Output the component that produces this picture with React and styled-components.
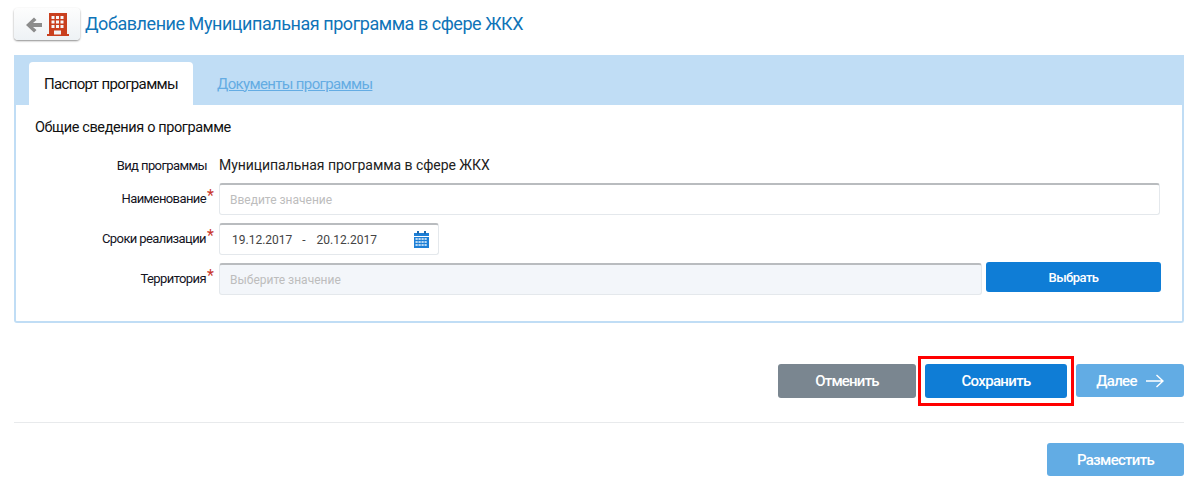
import React from "react";
import styled, { createGlobalStyle } from "styled-components";

const Global = createGlobalStyle`
  html, body { margin: 0; padding: 0; background: #fff; }
  body { font-family: Roboto, "Liberation Sans", sans-serif; color: #1c1c1c; }
  * { box-sizing: border-box; }
`;
const Page = styled.div`
  width: 1200px; height: 487px; overflow: hidden;
  padding: 8px 16px 0 14px;
`;
const Header = styled.header`
  display: flex; align-items: center; gap: 5px; height: 32px; margin-bottom: 15px;
`;
const BackButton = styled.button`
  width: 66px; height: 32px; padding: 0 0 0 11px; border: 0; border-radius: 4px;
  display: flex; align-items: center;
  background: linear-gradient(#fdfdfd, #eef2f5);
  box-shadow: 0 1px 2px rgba(0,0,0,.45);
`;
const Title = styled.h1`
  margin: 0; font-size: 18px; line-height: 32px; font-weight: 400; color: #0f74b8;
  letter-spacing: -0.45px; white-space: nowrap;
`;
const Panel = styled.section`
  height: 268px; border: 2px solid #c0ddf5; border-top: 0; border-radius: 0 0 3px 3px;
`;
const TabBar = styled.div`
  height: 50px; margin: 0 -2px; padding: 7px 0 0 15px; background: #c0ddf5;
  display: flex; align-items: stretch; gap: 24px;
`;
const ActiveTab = styled.div`
  width: 164px; background: #fff; border-radius: 4px 4px 0 0;
  display: flex; align-items: center; justify-content: center;
  font-size: 15px; letter-spacing: -0.64px; color: #111;
`;
const LinkTab = styled.a`
  align-self: center; font-size: 15px; letter-spacing: -0.65px; color: #64ace3;
  text-decoration: underline;
`;
const Body = styled.div`
  padding: 14px 22px 0 19px;
`;
const SectionTitle = styled.div`
  font-size: 14.5px; line-height: 18px; letter-spacing: -0.38px; color: #111; margin-bottom: 18px;
`;
const FormGrid = styled.div`
  display: grid; grid-template-columns: 184px 1fr; align-items: start;
`;
const Label = styled.div`
  display: flex; justify-content: flex-end; align-items: center;
  font-size: 13px; letter-spacing: -0.6px; color: #14141e;
  padding-right: ${p => (p.$required ? "5px" : "12px")};
  height: ${p => p.$h}px;
  white-space: nowrap;
`;
const Star = styled.span`
  color: #c8352b; font-size: 16px; line-height: 1; align-self: flex-start;
  margin: 5px 0 0 1px; width: 7px; letter-spacing: 0;
`;
const Row = styled.div`
  display: flex; gap: 4px; height: ${p => p.$h}px; align-items: flex-start;
`;
const StaticValue = styled.div`
  font-size: 14px; line-height: 20px; letter-spacing: -0.05px; color: #222;
`;
const Field = styled.div`
  height: 32px; flex: ${p => (p.$w ? `0 0 ${p.$w}px` : "1")};
  border: 1px solid #e4e8ec; border-top: 2px solid #b9bcbf; border-radius: 3px;
  background: ${p => (p.$disabled ? "#f3f6fa" : "#fff")};
  display: flex; align-items: center; padding: 0 0 0 10px;
  font-size: 12px; color: #bdbdbd;
`;
const DateField = styled(Field)`
  padding: 0 9px 0 12px; color: #444;
`;
const Dash = styled.span`
  margin: 0 11px 0 10px;
`;
const CalSlot = styled.span`
  margin-left: auto; display: flex;
`;
const Button = styled.button`
  border: 0; border-radius: 3px; color: #fff; padding: 0;
  font-family: inherit; font-weight: 500; letter-spacing: ${p => p.$ls}px;
  display: flex; align-items: center; justify-content: center; gap: 9px;
  background: ${p => p.$bg};
  width: ${p => p.$w}px; height: ${p => p.$h}px; font-size: ${p => p.$fs}px;
`;
const PickButton = styled(Button)`
  margin: -1px -1px 0 0;
`;
const Actions = styled.div`
  margin-top: 41px; height: 34px; display: flex; justify-content: flex-end; align-items: flex-start;
`;
const Highlight = styled.div`
  display: flex; padding: 5px 4px; margin: -8px 2px 0 2px; border: 3px solid #f00;
`;
const Divider = styled.hr`
  margin: 24px 0 0; border: 0; border-top: 1px solid #e8eaec;
`;
const Publish = styled.div`
  margin-top: 20px; display: flex; justify-content: flex-end;
`;

const BackIcon = () => (
  <svg width="46" height="26" viewBox="0 0 46 26">
    <path d="M1 14 L9 6.5 L11.5 9 L8 12 H17 V16 H8 L11.5 19 L9 21.5 Z" fill="#8c8c8c" />
    <path fillRule="evenodd" fill="#c9401f" d="M24 23V2h18v21h2v2H22v-2h2z M26.5 5h3v3h-3z M31 5h3v3h-3z M35.5 5h3v3h-3z M26.5 9.5h3v3h-3z M31 9.5h3v3h-3z M35.5 9.5h3v3h-3z M26.5 14h3v3h-3z M31 14h3v3h-3z M35.5 14h3v3h-3z M29 19.5h7v4h-7z" />
  </svg>
);
const CalendarIcon = () => (
  <svg width="15" height="17" viewBox="0 0 15 17">
    <rect x="0" y="2" width="15" height="15" fill="#1d7fd6" />
    <rect x="3" y="0" width="2" height="3" fill="#1d6ab0" />
    <rect x="10" y="0" width="2" height="3" fill="#1d6ab0" />
    <rect x="0" y="5" width="15" height="1" fill="#fff" />
    {[7, 10, 13].flatMap(y => [1.5, 4.5, 7.5, 10.5].map(x => (
      <rect key={`${x}-${y}`} x={x} y={y} width="2.2" height="2" fill="#b9d9f4" />
    )))}
  </svg>
);
const ArrowIcon = () => (
  <svg width="18" height="14" viewBox="0 0 18 14">
    <path d="M0 7H17M10.5 1L17 7L10.5 13" fill="none" stroke="#fff" strokeWidth="1.4" />
  </svg>
);

export default function App() {
  return (
    <Page>
      <Global />
      <Header>
        <BackButton aria-label="Назад"><BackIcon /></BackButton>
        <Title>Добавление Муниципальная программа в сфере ЖКХ</Title>
      </Header>
      <Panel>
        <TabBar>
          <ActiveTab>Паспорт программы</ActiveTab>
          <LinkTab>Документы программы</LinkTab>
        </TabBar>
        <Body>
          <SectionTitle>Общие сведения о программе</SectionTitle>
          <FormGrid>
            <Label $h={20}>Вид программы</Label>
            <Row $h={28}><StaticValue>Муниципальная программа в сфере ЖКХ</StaticValue></Row>
            <Label $h={30} $required>Наименование<Star>*</Star></Label>
            <Row $h={40}><Field>Введите значение</Field></Row>
            <Label $h={30} $required>Сроки реализации<Star>*</Star></Label>
            <Row $h={40}>
              <DateField $w={220}>
                <span>19.12.2017</span><Dash>-</Dash><span>20.12.2017</span>
                <CalSlot><CalendarIcon /></CalSlot>
              </DateField>
            </Row>
            <Label $h={30} $required>Территория<Star>*</Star></Label>
            <Row $h={40}>
              <Field $disabled>Выберите значение</Field>
              <PickButton $bg="#0f7dd6" $w={175} $h={30} $fs={13} $ls={-0.55}>Выбрать</PickButton>
            </Row>
          </FormGrid>
        </Body>
      </Panel>
      <Actions>
        <Button $bg="#7a8690" $w={138} $h={34} $fs={15} $ls={-0.8}>Отменить</Button>
        <Highlight>
          <Button $bg="#0f7dd6" $w={142} $h={34} $fs={15} $ls={-0.65}>Сохранить</Button>
        </Highlight>
        <Button $bg="#62ace4" $w={108} $h={33} $fs={15} $ls={-0.7}>Далее <ArrowIcon /></Button>
      </Actions>
      <Divider />
      <Publish>
        <Button $bg="#62ace4" $w={137} $h={33} $fs={15} $ls={-0.7}>Разместить</Button>
      </Publish>
    </Page>
  );
}
